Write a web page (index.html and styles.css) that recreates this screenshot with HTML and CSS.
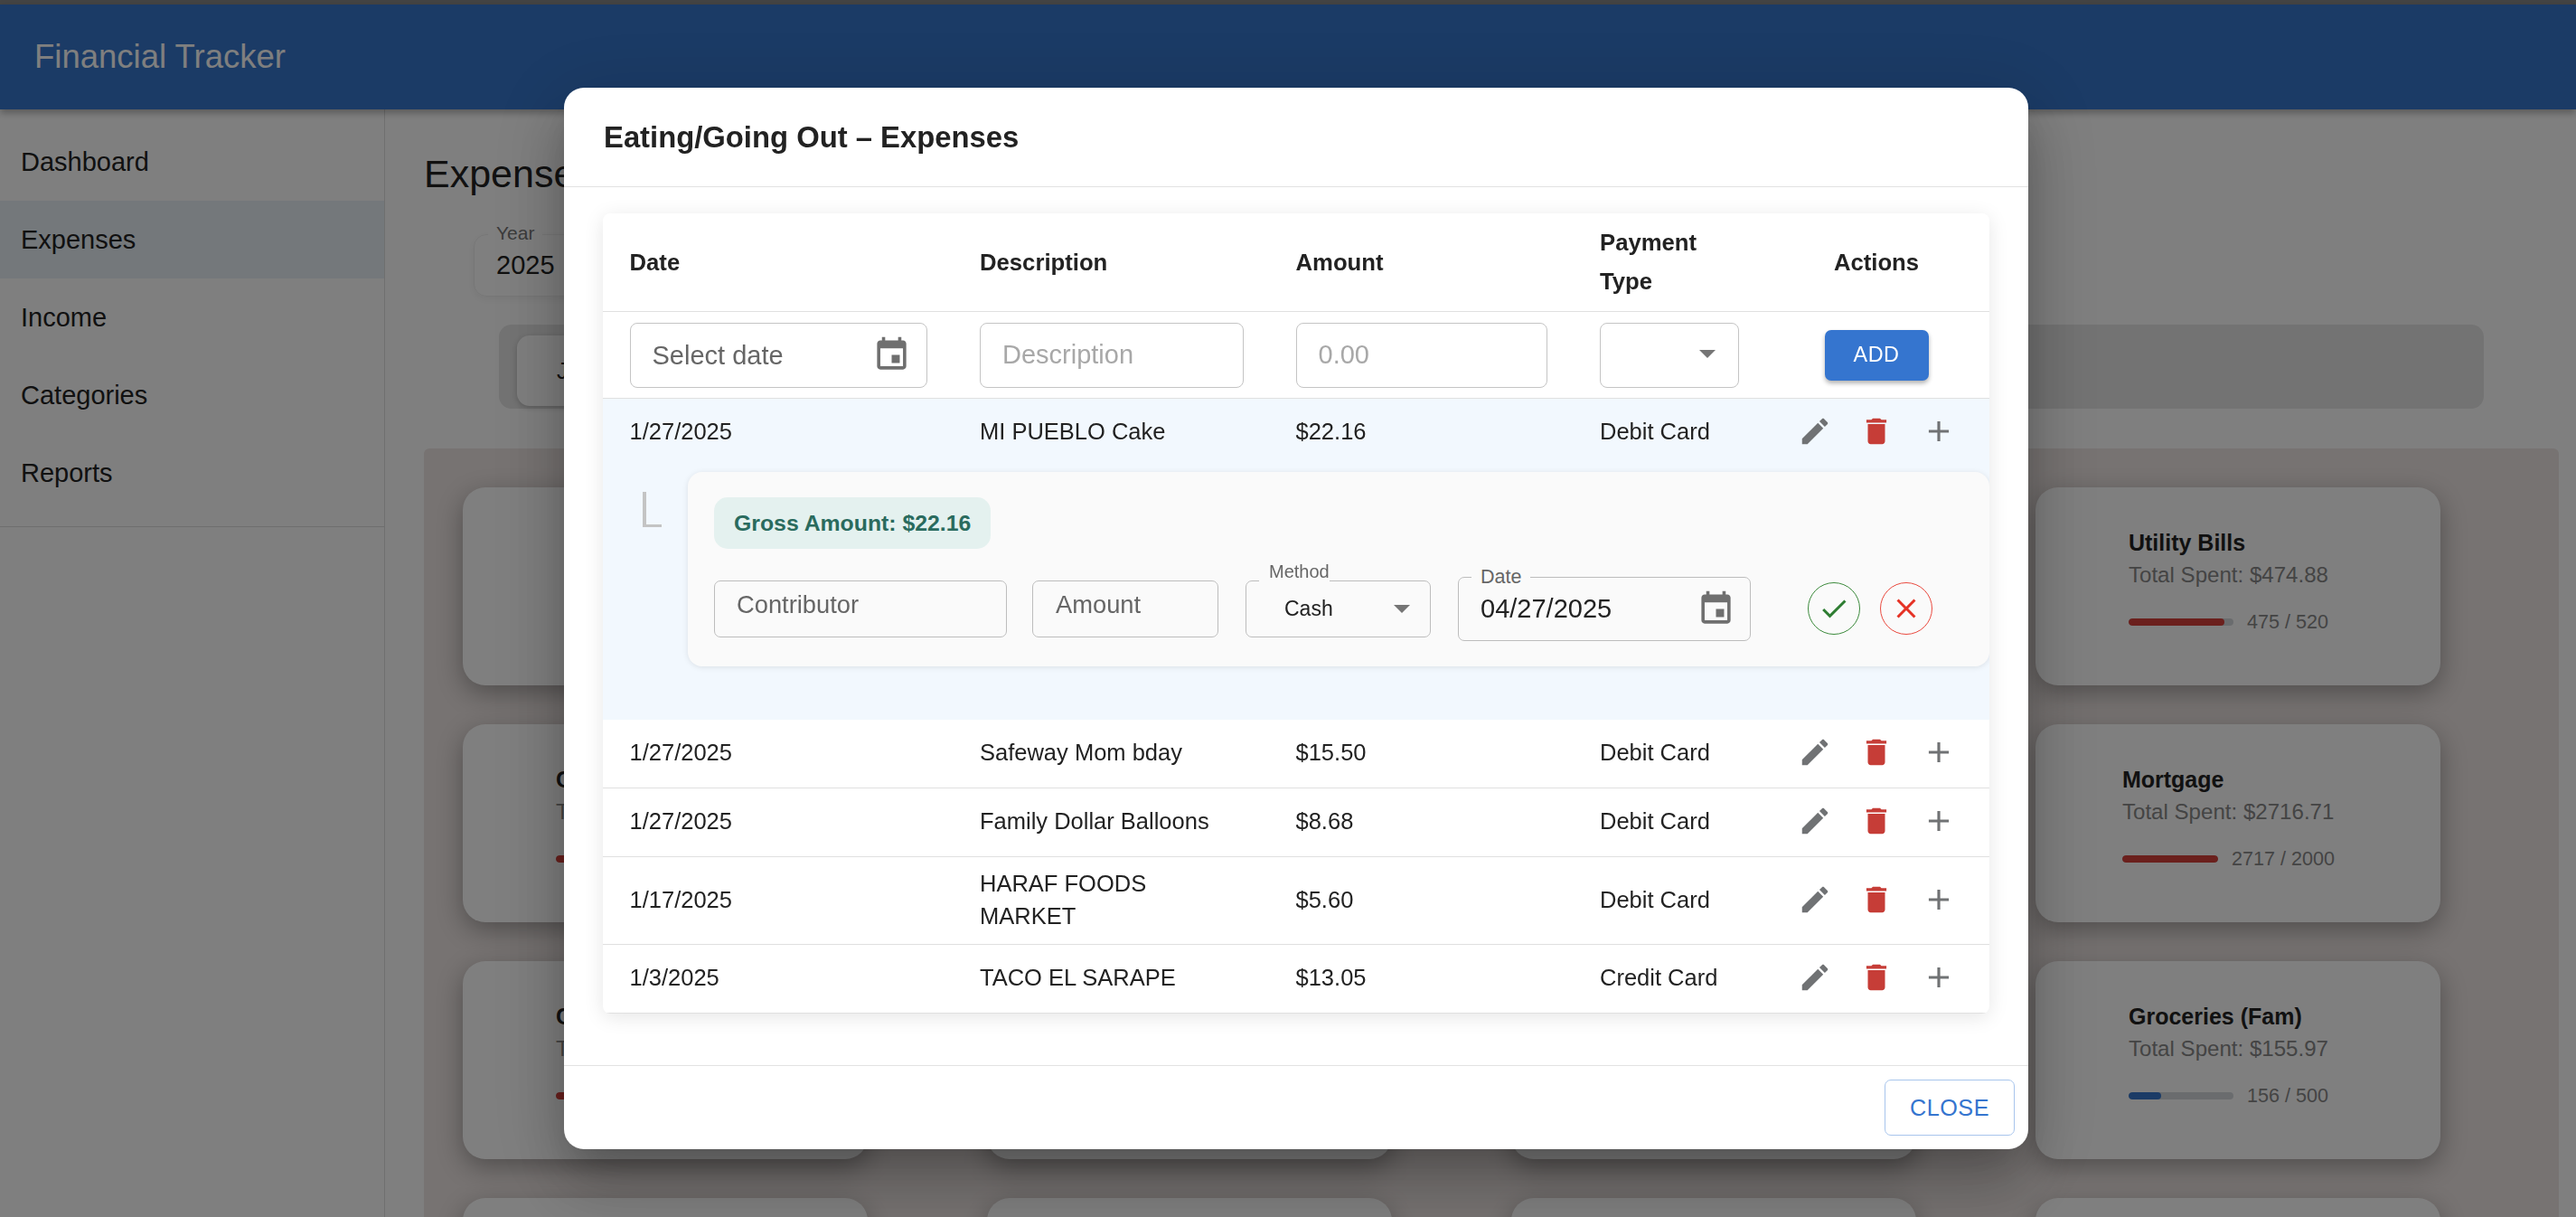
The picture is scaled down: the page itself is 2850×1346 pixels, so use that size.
FILE: index.html
```html
<!DOCTYPE html>
<html lang="en">
<head>
    <meta charset="UTF-8">
    <meta name="viewport" content="width=device-width, initial-scale=1.0">
    <link rel="stylesheet" href="styles.css">
    <title>Financial Tracker</title>
</head>
<body>
    <svg class="sprite" aria-hidden="true">
        <symbol id="i-edit" viewBox="0 0 24 24"><path d="M3 17.25V21h3.75L17.81 9.94l-3.75-3.75L3 17.25zM20.71 7.04c.39-.39.39-1.02 0-1.41l-2.34-2.34c-.39-.39-1.02-.39-1.41 0l-1.83 1.83 3.75 3.75 1.83-1.83z"/></symbol>
        <symbol id="i-delete" viewBox="0 0 24 24"><path d="M6 19c0 1.1.9 2 2 2h8c1.1 0 2-.9 2-2V7H6v12zM19 4h-3.5l-1-1h-5l-1 1H5v2h14V4z"/></symbol>
        <symbol id="i-add" viewBox="0 0 24 24"><path d="M19 13h-6v6h-2v-6H5v-2h6V5h2v6h6v2z"/></symbol>
        <symbol id="i-event" viewBox="0 0 24 24"><path d="M17 12h-5v5h5v-5zM16 1v2H8V1H6v2H5c-1.11 0-1.99.9-1.99 2L3 19c0 1.1.89 2 2 2h14c1.1 0 2-.9 2-2V5c0-1.1-.9-2-2-2h-1V1h-2zm3 18H5V8h14v11z"/></symbol>
        <symbol id="i-check" viewBox="0 0 24 24"><path d="M9 16.17L4.83 12l-1.42 1.41L9 19 21 7l-1.41-1.41z"/></symbol>
        <symbol id="i-close" viewBox="0 0 24 24"><path d="M19 6.41L17.59 5 12 10.59 6.41 5 5 6.41 10.59 12 5 17.59 6.41 19 12 13.41 17.59 19 19 17.59 13.41 12z"/></symbol>
    </svg>

    <div class="top-strip"></div>
    <header class="appbar">
        <span class="appbar-title">Financial Tracker</span>
    </header>

    <div class="layout">
        <aside class="sidebar">
            <nav class="nav">
                <div class="nav-item">Dashboard</div>
                <div class="nav-item nav-item-active">Expenses</div>
                <div class="nav-item">Income</div>
                <div class="nav-item">Categories</div>
                <div class="nav-item">Reports</div>
            </nav>
        </aside>

        <main class="content">
            <h1 class="page-title">Expenses</h1>

            <div class="year-field">
                <span class="year-label">Year</span>
                <span class="year-value">2025</span>
            </div>

            <div class="month-tabs">
                <div class="month-tab">Jan</div>
            </div>

            <section class="category-panel">
                <div class="category-grid">
                    <div class="card"></div>
                    <div class="card"></div>
                    <div class="card"></div>
                    <div class="card">
                        <div class="card-body">
                            <div class="card-title">Utility Bills</div>
                            <div class="card-total">Total Spent: $474.88</div>
                            <div class="card-bar">
                                <div class="track"><div class="fill fill-red" style="width: 91%"></div></div>
                                <span class="bar-label">475 / 520</span>
                            </div>
                        </div>
                    </div>

                    <div class="card">
                        <div class="card-body">
                            <div class="card-title">Car Payment</div>
                            <div class="card-total">Total Spent: $520.00</div>
                            <div class="card-bar">
                                <div class="track"><div class="fill fill-red" style="width: 100%"></div></div>
                                <span class="bar-label">520 / 500</span>
                            </div>
                        </div>
                    </div>
                    <div class="card"></div>
                    <div class="card"></div>
                    <div class="card">
                        <div class="card-body">
                            <div class="card-title">Mortgage</div>
                            <div class="card-total">Total Spent: $2716.71</div>
                            <div class="card-bar">
                                <div class="track track-short"><div class="fill fill-red" style="width: 100%"></div></div>
                                <span class="bar-label">2717 / 2000</span>
                            </div>
                        </div>
                    </div>

                    <div class="card">
                        <div class="card-body">
                            <div class="card-title">Clothing</div>
                            <div class="card-total">Total Spent: $310.00</div>
                            <div class="card-bar">
                                <div class="track"><div class="fill fill-red" style="width: 100%"></div></div>
                                <span class="bar-label">310 / 300</span>
                            </div>
                        </div>
                    </div>
                    <div class="card"></div>
                    <div class="card"></div>
                    <div class="card">
                        <div class="card-body">
                            <div class="card-title">Groceries (Fam)</div>
                            <div class="card-total">Total Spent: $155.97</div>
                            <div class="card-bar">
                                <div class="track"><div class="fill fill-blue" style="width: 31%"></div></div>
                                <span class="bar-label">156 / 500</span>
                            </div>
                        </div>
                    </div>

                    <div class="card"></div>
                    <div class="card"></div>
                    <div class="card"></div>
                    <div class="card"></div>
                </div>
            </section>
        </main>
    </div>

    <!-- Dialog -->
    <div class="backdrop"></div>
    <div class="dialog">
        <div class="dialog-title">Eating/Going Out – Expenses</div>

        <div class="dialog-body">
            <div class="table-wrap">
                <table class="expense-table">
                    <colgroup>
                        <col class="col-date">
                        <col class="col-desc">
                        <col class="col-amount">
                        <col class="col-type">
                        <col class="col-actions">
                    </colgroup>
                    <thead>
                        <tr>
                            <th>Date</th>
                            <th>Description</th>
                            <th>Amount</th>
                            <th>Payment Type</th>
                            <th class="center">Actions</th>
                        </tr>
                    </thead>
                    <tbody>
                        <tr class="input-row">
                            <td>
                                <div class="field field-date">
                                    <span class="text-muted">Select date</span>
                                    <svg class="icon-event"><use href="#i-event"/></svg>
                                </div>
                            </td>
                            <td><div class="field"><span class="text-faint">Description</span></div></td>
                            <td><div class="field"><span class="text-faint">0.00</span></div></td>
                            <td><div class="field field-select"><span class="arrow"></span></div></td>
                            <td class="center"><button class="btn-add">ADD</button></td>
                        </tr>

                        <tr class="row-open">
                            <td>1/27/2025</td>
                            <td>MI PUEBLO Cake</td>
                            <td>$22.16</td>
                            <td>Debit Card</td>
                            <td>
                                <div class="actions">
                                    <svg class="icon icon-grey"><use href="#i-edit"/></svg>
                                    <svg class="icon icon-red"><use href="#i-delete"/></svg>
                                    <svg class="icon icon-grey"><use href="#i-add"/></svg>
                                </div>
                            </td>
                        </tr>
                        <tr class="row-detail">
                            <td colspan="5">
                                <div class="detail">
                                    <div class="branch"></div>
                                    <div class="detail-panel">
                                        <div class="gross-chip">Gross Amount: $22.16</div>
                                        <div class="detail-form">
                                            <div class="mini-field mini-contributor"><span>Contributor</span></div>
                                            <div class="mini-field mini-amount"><span>Amount</span></div>
                                            <div class="mini-field mini-method">
                                                <span class="method-label">Method</span>
                                                <span class="method-value">Cash</span>
                                                <span class="arrow arrow-method"></span>
                                            </div>
                                            <div class="date-field">
                                                <span class="date-label">Date</span>
                                                <span class="date-value">04/27/2025</span>
                                                <svg class="icon-event"><use href="#i-event"/></svg>
                                            </div>
                                            <div class="round-btn round-ok"><svg class="icon-round"><use href="#i-check"/></svg></div>
                                            <div class="round-btn round-cancel"><svg class="icon-round"><use href="#i-close"/></svg></div>
                                        </div>
                                    </div>
                                </div>
                            </td>
                        </tr>

                        <tr>
                            <td>1/27/2025</td>
                            <td>Safeway Mom bday</td>
                            <td>$15.50</td>
                            <td>Debit Card</td>
                            <td>
                                <div class="actions">
                                    <svg class="icon icon-grey"><use href="#i-edit"/></svg>
                                    <svg class="icon icon-red"><use href="#i-delete"/></svg>
                                    <svg class="icon icon-grey"><use href="#i-add"/></svg>
                                </div>
                            </td>
                        </tr>
                        <tr>
                            <td>1/27/2025</td>
                            <td>Family Dollar Balloons</td>
                            <td>$8.68</td>
                            <td>Debit Card</td>
                            <td>
                                <div class="actions">
                                    <svg class="icon icon-grey"><use href="#i-edit"/></svg>
                                    <svg class="icon icon-red"><use href="#i-delete"/></svg>
                                    <svg class="icon icon-grey"><use href="#i-add"/></svg>
                                </div>
                            </td>
                        </tr>
                        <tr>
                            <td>1/17/2025</td>
                            <td>HARAF FOODS MARKET</td>
                            <td>$5.60</td>
                            <td>Debit Card</td>
                            <td>
                                <div class="actions">
                                    <svg class="icon icon-grey"><use href="#i-edit"/></svg>
                                    <svg class="icon icon-red"><use href="#i-delete"/></svg>
                                    <svg class="icon icon-grey"><use href="#i-add"/></svg>
                                </div>
                            </td>
                        </tr>
                        <tr>
                            <td>1/3/2025</td>
                            <td>TACO EL SARAPE</td>
                            <td>$13.05</td>
                            <td>Credit Card</td>
                            <td>
                                <div class="actions">
                                    <svg class="icon icon-grey"><use href="#i-edit"/></svg>
                                    <svg class="icon icon-red"><use href="#i-delete"/></svg>
                                    <svg class="icon icon-grey"><use href="#i-add"/></svg>
                                </div>
                            </td>
                        </tr>
                    </tbody>
                </table>
            </div>
        </div>

        <div class="dialog-footer">
            <button class="btn-close">CLOSE</button>
        </div>
    </div>
</body>
</html>
```

FILE: styles.css
```css
* {
    box-sizing: border-box;
}

body {
    margin: 0;
    height: 1346px;
    overflow: hidden;
    display: flex;
    flex-direction: column;
    background-color: #fff;
    color: #222;
    font-family: "Liberation Sans", Arial, sans-serif;
}

.sprite {
    display: none;
}

.top-strip {
    height: 5px;
    flex-shrink: 0;
    background-color: #888;
}

.appbar {
    height: 116px;
    flex-shrink: 0;
    padding-left: 38px;
    display: flex;
    align-items: center;
    background-color: #3676cc;
    box-shadow: 0 4px 8px rgba(0, 0, 0, 0.3);
    position: relative;
    z-index: 1;
}

.appbar-title {
    font-size: 36.5px;
    color: #fff;
}

.layout {
    flex: 1;
    display: flex;
    min-height: 0;
    overflow: hidden;
}

.sidebar {
    width: 426px;
    flex-shrink: 0;
    border-right: 1px solid #dedede;
}

.nav {
    padding: 15px 0 16px;
    border-bottom: 1px solid #dedede;
}

.nav-item {
    height: 86px;
    padding-left: 23px;
    display: flex;
    align-items: center;
    font-size: 29px;
}

.nav-item-active {
    background-color: #e8f0f6;
}

.content {
    flex: 1;
    min-width: 0;
    padding: 45px 19px 0 43px;
    display: flex;
    flex-direction: column;
}

.page-title {
    margin: 0;
    flex-shrink: 0;
    font-size: 43px;
    font-weight: normal;
    line-height: 52px;
}

.year-field {
    position: relative;
    flex-shrink: 0;
    width: 200px;
    height: 69px;
    margin: 41px 0 0 55px;
    padding: 17px 24px 0;
    border: 1px solid #eee;
    border-radius: 14px;
    box-shadow: 0 3px 10px rgba(0, 0, 0, 0.06);
}

.year-label {
    position: absolute;
    left: 15px;
    top: -14px;
    padding: 0 9px;
    background-color: #fff;
    font-size: 21px;
    color: #777;
}

.year-value {
    font-size: 29px;
}

.month-tabs {
    flex-shrink: 0;
    width: 2196px;
    height: 93px;
    margin: 31px 0 0 83px;
    padding: 12px 20px 3px;
    background-color: #e6e6e6;
    border-radius: 14px;
}

.month-tab {
    width: 150px;
    height: 78px;
    padding-left: 44px;
    display: flex;
    align-items: center;
    background-color: #fff;
    border-radius: 14px;
    box-shadow: 0 2px 6px rgba(0, 0, 0, 0.2);
    font-size: 25px;
}

.category-panel {
    flex: 1;
    min-height: 0;
    margin-top: 44px;
    padding: 43px 0 0 43px;
    background-color: #eee6e4;
    border-radius: 6px 6px 0 0;
    overflow: hidden;
}

.category-grid {
    display: grid;
    grid-template-columns: repeat(4, 448px);
    grid-auto-rows: 219px;
    column-gap: 132px;
    row-gap: 43px;
}

.card {
    display: flex;
    justify-content: center;
    padding-top: 46px;
    background-color: #fff;
    border-radius: 25px;
    box-shadow: 0 9px 29px rgba(0, 0, 0, 0.32);
}

.card-title {
    font-size: 25px;
    font-weight: bold;
    line-height: 30px;
}

.card-total {
    margin-top: 6px;
    font-size: 24.1px;
    line-height: 30px;
    color: #888;
}

.card-bar {
    margin-top: 24px;
    padding-right: 21px;
    display: flex;
    align-items: center;
    gap: 15px;
    height: 26px;
    font-size: 21.6px;
    color: #888;
}

.track {
    width: 116px;
    height: 8px;
    background-color: #d5d8dc;
    border-radius: 4px;
    overflow: hidden;
}

.track-short {
    width: 106px;
}

.fill {
    height: 100%;
    border-radius: 4px;
}

.fill-red {
    background-color: #d6403a;
}

.fill-blue {
    background-color: #3676cc;
}

/* Dialog */
.backdrop {
    position: fixed;
    inset: 0;
    z-index: 2;
    background-color: rgba(0, 0, 0, 0.5);
}

.dialog {
    position: fixed;
    left: 624px;
    top: 97px;
    z-index: 3;
    width: 1620px;
    height: 1174px;
    display: flex;
    flex-direction: column;
    background-color: #fff;
    border-radius: 22px;
    box-shadow: 0 20px 43px -13px rgba(0, 0, 0, 0.2), 0 43px 68px 5px rgba(0, 0, 0, 0.14), 0 16px 83px 14px rgba(0, 0, 0, 0.12);
}

.dialog-title {
    height: 110px;
    padding: 0 43px 0 44px;
    display: flex;
    align-items: center;
    border-bottom: 1px solid #e2e2e2;
    font-size: 32.8px;
    font-weight: bold;
}

.dialog-body {
    flex: 1;
    padding: 29px 43px 0;
}

.table-wrap {
    background-color: #fff;
    border-radius: 8px;
    box-shadow: 0 4px 22px rgba(0, 0, 0, 0.1);
    overflow: hidden;
}

.expense-table {
    width: 100%;
    table-layout: fixed;
    border-collapse: collapse;
}

.col-date {
    width: 387.5px;
}

.col-desc {
    width: 349.5px;
}

.col-amount {
    width: 336.5px;
}

.col-type {
    width: 210.5px;
}

.col-actions {
    width: 250px;
}

th {
    padding: 11px 29.5px;
    border-bottom: 1px solid #e0e0e0;
    font-size: 25.7px;
    line-height: 43px;
    text-align: left;
}

td {
    height: 76px;
    padding: 10.5px 29.5px 13.5px;
    border-bottom: 1px solid #e0e0e0;
    font-size: 25.5px;
    line-height: 36px;
}

th.center,
td.center {
    text-align: center;
}

.input-row td {
    height: 95px;
    padding: 11.5px 29.5px;
}

.row-open td {
    border-bottom: none;
    background-color: #f2f8fe;
}

.row-detail td {
    height: 279px;
    padding: 0;
    background-color: #f2f8fe;
    border-bottom: none;
}

.field {
    width: calc(100% + 1px);
    height: 72px;
    padding: 0 24px 2px;
    display: flex;
    align-items: center;
    border: 1px solid #c4c4c4;
    border-radius: 8px;
    font-size: 29px;
    background-color: #fff;
}

.field-date {
    justify-content: space-between;
    padding-right: 17px;
    padding-bottom: 0;
}

.field-select {
    width: calc(100% + 2px);
    justify-content: flex-end;
    padding-right: 25px;
}

.text-muted {
    color: #666;
}

.text-faint {
    color: #a8a8a8;
}

.icon-event {
    width: 43px;
    height: 43px;
    fill: #6f6f6f;
}

.arrow {
    width: 0;
    height: 0;
    border-left: 9px solid transparent;
    border-right: 9px solid transparent;
    border-top: 9px solid #757575;
}

.btn-add {
    width: 115px;
    height: 56px;
    padding: 0;
    border: none;
    border-radius: 7px;
    background-color: #3575cf;
    color: #fff;
    font-family: inherit;
    font-size: 23.4px;
    letter-spacing: 0.5px;
    box-shadow: 0 3px 5px rgba(0, 0, 0, 0.3);
}

.actions {
    display: flex;
    justify-content: center;
    gap: 30.5px;
    height: 38px;
    margin: -1px 0;
}

.icon {
    width: 38px;
    height: 38px;
}

.icon-grey {
    fill: #707274;
}

.icon-red {
    fill: #c63d37;
}

.detail {
    display: flex;
    padding: 5px 0 59px 44px;
}

.branch {
    width: 21px;
    height: 39px;
    margin-top: 22px;
    border-left: 4px solid #c4c4c4;
    border-bottom: 3px solid #c4c4c4;
}

.detail-panel {
    flex: 1;
    margin-left: 29px;
    padding: 28px 29px 28px;
    background-color: #fafafa;
    border-radius: 16px;
    box-shadow: 0 1px 6px rgba(0, 0, 0, 0.1);
}

.gross-chip {
    display: inline-block;
    height: 57px;
    padding: 0 22px;
    background-color: #e4f1ef;
    border-radius: 15px;
    color: #2a6b5e;
    font-size: 24.8px;
    font-weight: bold;
    line-height: 57px;
}

.detail-form {
    display: flex;
    align-items: center;
    height: 71px;
    margin-top: 31px;
}

.mini-field {
    position: relative;
    height: 63px;
    padding: 0 24px 8px;
    display: flex;
    align-items: center;
    border: 1px solid #bdbdbd;
    border-radius: 7px;
    font-size: 27.3px;
    line-height: 36px;
    color: #666;
}

.mini-contributor {
    width: 324px;
}

.mini-amount {
    width: 206px;
    margin-left: 28px;
    padding-left: 25px;
}

.mini-method {
    width: 205px;
    margin-left: 30px;
    padding: 0 22px 0 42px;
    justify-content: space-between;
    color: #222;
}

.method-label {
    position: absolute;
    left: 14px;
    top: -24px;
    padding-left: 11px;
    background-color: #fafafa;
    color: #666;
    font-size: 20px;
    line-height: 26px;
}

.method-value {
    font-size: 23px;
}

.date-field {
    position: relative;
    width: 324px;
    height: 71px;
    margin-left: 30px;
    padding: 0 16px 0 24px;
    display: flex;
    align-items: center;
    justify-content: space-between;
    border: 1px solid #bdbdbd;
    border-radius: 7px;
}

.date-label {
    position: absolute;
    left: 14px;
    top: -14px;
    padding: 0 10px;
    background-color: #fafafa;
    color: #666;
    font-size: 21.5px;
    line-height: 26px;
}

.date-value {
    font-size: 29px;
}

.round-btn {
    width: 58px;
    height: 58px;
    display: flex;
    align-items: center;
    justify-content: center;
    border-radius: 50%;
}

.round-ok {
    margin-left: 63px;
    border: 1.5px solid #3c8a3c;
    fill: #2e7d32;
}

.round-cancel {
    margin-left: 22px;
    border: 1.5px solid #ea4a3f;
    fill: #e53225;
}

.icon-round {
    width: 36px;
    height: 36px;
}

.dialog-footer {
    height: 93px;
    padding: 0 15px 0 0;
    display: flex;
    align-items: center;
    justify-content: flex-end;
    border-top: 1px solid #e2e2e2;
}

.btn-close {
    width: 144px;
    height: 62px;
    padding: 0;
    border: 1px solid #a8c5ec;
    border-radius: 7px;
    background-color: #fff;
    color: #3575cf;
    font-family: inherit;
    font-size: 25.2px;
    letter-spacing: 0.5px;
}
```
